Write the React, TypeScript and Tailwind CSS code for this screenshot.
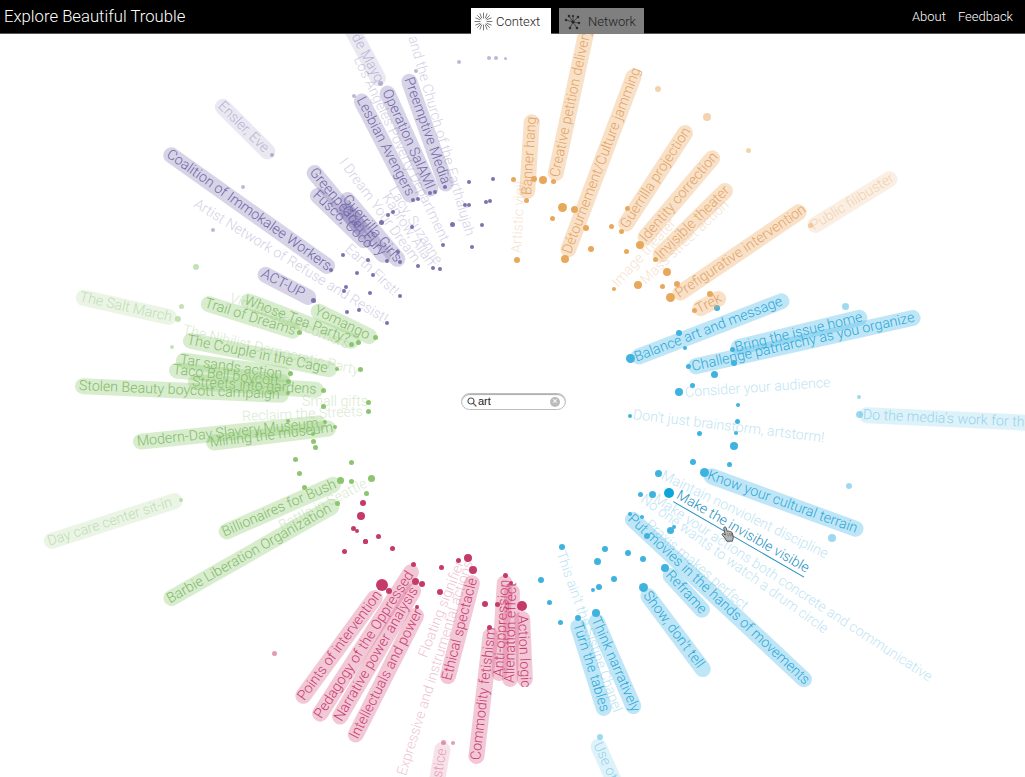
import React from "react";

type Label = [string, number, number, number, number, number?]; // text, x1, y1, x2, y2, level
type Dot = [number, number, number?, number?]; // x, y, size, level

type Group = {
  text: string;
  pill: string;
  dot: string;
  dotSize: number;
  labels: Label[];
  dots: Dot[];
};

const groups: Group[] = [
  {
    text: "text-[#7267a8]",
    pill: "bg-[#7b6fb0]/30",
    dot: "bg-[#7d72ae]",
    dotSize: 4,
    labels: [
      ["Coalition of Immokalee Workers", 168, 153, 330, 268],
      ["Ensler, Eve", 220, 104, 270, 154, 2],
      ["Artist Network of Refuse and Resist!", 195, 203, 383, 318, 3],
      ["ACT-UP", 262, 273, 312, 299],
      ["Greenpeace", 312, 170, 362, 230],
      ["Gran Fury", 344, 208, 386, 258],
      ["Guerrilla Girls", 345, 197, 400, 262],
      ["Fusco, Coco", 315, 193, 367, 243],
      ["Lesbian Avengers", 360, 98, 412, 198],
      ["Operation SalAMI", 386, 90, 432, 192],
      ["Preemptive Media", 408, 78, 447, 187],
      ["Madres de la Plaza de Mayo", 298, -72, 380, 82, 2],
      ["Los Angeles Poverty Department", 357, 57, 443, 237, 3],
      ["Reverend Billy and the Church of the Earthalujah", 387, -50, 472, 243, 3],
      ["I Dream Your Dream", 342, 160, 418, 263, 3],
      ["Lacy, Suzanne", 392, 188, 440, 265, 3],
      ["Kaprow, Allan", 385, 195, 433, 267, 3],
      ["Earth First!", 347, 247, 398, 295, 3],
    ],
    dots: [
      [243, 187, 4, 2], [213, 230, 4, 2], [272, 155, 4, 2], [354, 96, 4, 2], [380, 83, 5, 2], [416, 71, 4, 2],
      [459, 62, 4, 2], [489, 58, 4, 2], [496, 58, 4, 2], [505, 58, 3, 2],
      [469, 182], [493, 179], [465, 205], [469, 205], [486, 202], [490, 201], [452, 224, 5], [482, 225], [472, 247],
      [443, 245], [445, 187], [435, 192], [430, 193], [413, 200], [418, 199], [393, 212], [388, 215], [381, 222, 5],
      [412, 227], [343, 255], [368, 260], [387, 261], [400, 262], [398, 252], [418, 266], [433, 268], [440, 269],
      [331, 270], [357, 273], [373, 275], [346, 287], [344, 291], [370, 293], [400, 296], [313, 300, 5], [347, 312],
      [359, 310], [387, 323],
    ],
  },
  {
    text: "text-[#84b96a]",
    pill: "bg-[#8ecb73]/35",
    dot: "bg-[#8cc46f]",
    dotSize: 5,
    labels: [
      ["The Salt March", 80, 297, 173, 318, 2],
      ["Virtual Streetcorners", 230, 298, 343, 343, 3],
      ["Trail of Dreams", 205, 303, 297, 332],
      ["Whose Tea Party?", 245, 300, 355, 342],
      ["Yomango", 315, 310, 373, 338],
      ["The Nihilist Democratic Party", 183, 330, 355, 370, 3],
      ["The Couple in the Cage", 187, 340, 333, 370],
      ["Tar sands action", 180, 360, 287, 375],
      ["Taco Bell boycott", 173, 370, 285, 382],
      ["Streets into gardens", 192, 382, 320, 390],
      ["Stolen Beauty boycott campaign", 79, 386, 285, 395],
      ["Small gifts", 302, 402, 363, 402, 3],
      ["Reclaim the Streets", 242, 417, 363, 412, 3],
      ["Modern-Day Slavery Museum", 137, 442, 322, 423],
      ["Mining the museum", 210, 443, 332, 428],
      ["Billionaires for Bush", 223, 533, 337, 483],
      ["Battle in Seattle", 280, 527, 368, 482, 3],
      ["Barbie Liberation Organization", 168, 600, 335, 505],
      ["Day care center sit-in", 48, 542, 178, 500, 2],
    ],
    dots: [
      [181, 306, 5, 2], [178, 319, 6, 2], [172, 347, 4, 2], [181, 500, 4, 2], [196, 267, 6, 2],
      [299, 332], [375, 337], [358, 342], [351, 344], [337, 369, 4], [360, 369], [290, 373], [288, 381], [323, 390],
      [288, 393, 4], [323, 406], [368, 402], [368, 411], [288, 421, 4], [325, 422, 4], [335, 427, 4], [313, 434, 4],
      [313, 441], [315, 447], [295, 459], [299, 473], [351, 462], [304, 487], [340, 480, 7], [351, 481], [371, 478, 7],
      [366, 493], [337, 503],
    ],
  },
  {
    text: "text-[#c93a6e]",
    pill: "bg-[#db5f8a]/35",
    dot: "bg-[#c53a69]",
    dotSize: 5,
    labels: [
      ["Points of intervention", 301, 699, 377, 595],
      ["Pedagogy of the Oppressed", 318, 717, 413, 569],
      ["Narrative power analysis", 338, 720, 415, 588],
      ["Intellectuals and power", 354, 738, 418, 612],
      ["Floating signifier", 423, 657, 457, 570, 3],
      ["Expressive and instrumental actions", 402, 775, 467, 568, 3],
      ["Ethical spectacle", 447, 680, 473, 579],
      ["Commodity fetishism", 476, 760, 491, 632],
      ["Anti-oppression", 499, 677, 505, 579],
      ["Alienation effect", 510, 683, 512, 588],
      ["Action logic", 522, 615, 525, 683],
      ["Environmental justice", 420, 880, 443, 746, 2],
    ],
    dots: [
      [344, 551], [365, 541], [392, 548], [382, 585, 12], [389, 591, 6], [413, 564], [415, 581, 7], [422, 584, 6],
      [417, 607, 4], [274, 653, 5, 2], [441, 567], [458, 560], [468, 558, 8], [473, 570, 8], [440, 592, 6], [485, 604, 6],
      [497, 604, 5], [489, 627, 5], [505, 575, 5], [511, 583, 4], [522, 606, 10], [443, 742, 5, 2], [453, 743, 4, 2],
      [363, 503, 6], [361, 516, 8], [353, 528, 5], [357, 531, 4], [378, 536, 5], [365, 541, 5],
    ],
  },
  {
    text: "text-[#2ba6d8]",
    pill: "bg-[#48b8e4]/35",
    dot: "bg-[#3fb3df]",
    dotSize: 5,
    labels: [
      ["Maintain nonviolent discipline", 662, 475, 823, 553, 3],
      ["Make your actions both concrete and communicative", 655, 498, 930, 678, 3],
      ["No one wants to watch a drum circle", 642, 498, 828, 632, 3],
      ["Praxis makes perfect", 647, 523, 743, 605, 3],
      ["Put movies in the hands of movements", 630, 517, 807, 682],
      ["Reframe", 668, 573, 705, 613],
      ["Show, don't tell", 646, 593, 705, 672],
      ["Think narratively", 595, 618, 635, 710],
      ["Turn the tables", 577, 623, 605, 712],
      ["This ain't the Sistine Chapel", 560, 552, 618, 713, 3],
      ["Use others' actions as flyers", 597, 743, 650, 862, 2],
      ["Balance art and message", 635, 358, 785, 300],
      ["Bring the issue home", 735, 348, 863, 317],
      ["Challenge patriarchy as you organize", 692, 367, 917, 317],
      ["Consider your audience", 685, 393, 830, 383, 3],
      ["Don't just brainstorm, artstorm!", 633, 415, 822, 438, 3],
      ["Do the media's work for them", 863, 415, 1053, 424, 2],
      ["Know your cultural terrain", 708, 475, 859, 530],
    ],
    dots: [
      [630, 358, 9], [679, 333, 6], [685, 348, 4], [688, 366, 5], [717, 308, 6], [732, 349, 5], [734, 363, 6], [714, 374, 7],
      [845, 306, 7, 2], [692, 385, 5], [679, 392, 8], [738, 405, 4], [737, 421, 5], [859, 397, 4, 2], [859, 414, 7, 2],
      [630, 416, 4], [699, 433, 5], [736, 433, 4], [734, 446, 8], [693, 462, 6], [729, 464, 5], [704, 472, 9], [849, 486, 6, 2],
      [658, 473, 7], [652, 494, 7], [640, 494, 5], [832, 538, 8, 2], [630, 514, 4], [642, 517, 4], [647, 536, 6], [670, 530, 7],
      [674, 527, 4], [605, 549, 6], [628, 553, 6], [643, 559, 6], [665, 568, 8], [614, 579, 6], [562, 547, 6], [597, 561, 7],
      [599, 587, 6], [593, 590, 4], [643, 587, 9], [541, 580, 6], [549, 602, 5], [560, 622, 5], [578, 618, 6], [596, 613, 8],
      [600, 737, 6, 2],
    ],
  },
  {
    text: "text-[#e2a467]",
    pill: "bg-[#eda860]/35",
    dot: "bg-[#e8a85c]",
    dotSize: 5,
    labels: [
      ["Banner hang", 527, 195, 532, 118],
      ["Creative petition delivery", 555, 177, 590, 15],
      ["Détournement/Culture jamming", 567, 253, 635, 73],
      ["Artistic vigil", 517, 253, 520, 197, 3],
      ["Guerrilla projection", 624, 227, 687, 130],
      ["Identity correction", 643, 240, 715, 155],
      ["Invisible theater", 658, 257, 728, 188],
      ["Image theater", 615, 285, 673, 222, 3],
      ["Mass street action", 643, 282, 727, 203, 3],
      ["Prefigurative intervention", 677, 295, 802, 210],
      ["Public filibuster", 812, 227, 893, 177, 2],
      ["Trek", 697, 310, 722, 297],
    ],
    dots: [
      [513, 179, 5], [534, 179, 6], [543, 180, 8], [553, 181, 5], [526, 200, 5], [562, 207, 9], [574, 209, 7], [552, 218, 5],
      [586, 228, 6], [591, 249, 6], [565, 259, 8], [517, 260, 6], [627, 208, 5], [611, 226, 5], [621, 231, 5], [640, 245, 8],
      [626, 251, 5], [655, 259, 5], [667, 272, 8], [638, 285, 8], [662, 286, 5], [614, 289, 4], [677, 284, 6], [670, 297, 9],
      [710, 294, 6], [694, 310, 5], [658, 89, 6, 2], [707, 117, 8, 2], [748, 150, 5, 2], [810, 225, 5, 2],
    ],
  },
];

const RadialLabel = ({ label, group }: { label: Label; group: Group }) => {
  const [text, x1, y1, x2, y2, level = 1] = label;
  const length = Math.hypot(x2 - x1, y2 - y1);
  const angle = (Math.atan2(y2 - y1, x2 - x1) * 180) / Math.PI;
  return (
    <div
      className={`absolute flex h-[16px] origin-[4px_50%] items-center whitespace-nowrap rounded-full px-1 text-[14.2px] font-light ${
        level === 3 ? "opacity-30" : level === 2 ? "opacity-50" : ""
      } ${level === 3 ? "" : group.pill} ${group.text}`}
      style={{
        left: x1 - 4,
        top: y1 - 8,
        width: length + 8,
        transform: `rotate(${angle}deg)`,
      }}
    >
      {text}
    </div>
  );
};

const SpinnerIcon = () => (
  <svg width="19" height="19" viewBox="0 0 19 19" stroke="#555" strokeWidth="0.8" strokeLinecap="round">
    <path d="M9.500 1v5M9.500 13v5M1 9.500h5M13 9.500h5M3.500 3.500l3.500 3.500M12 12l3.500 3.500M15.500 3.500L12 7M7 12l-3.500 3.500M6 1.700l1.600 4.200M11.400 13l1.600 4.200M13 1.700l-1.600 4.200M7.600 13L6 17.200M1.700 6l4.200 1.600M13 11.400l4.200 1.600M17.200 6L13 7.600M6 11.400L1.700 13" />
  </svg>
);

const NetworkIcon = () => (
  <svg width="18" height="18" viewBox="0 0 18 18" stroke="#222" strokeWidth="0.6" fill="#222">
    <path d="M5 3l4 6 5-5M2 7l7 2 6 1M9 9l-3 6M9 9l4 6M9 9V3" fill="none" />
    <circle cx="5" cy="3" r="1" />
    <circle cx="9" cy="3" r="0.8" />
    <circle cx="14" cy="4" r="1" />
    <circle cx="2" cy="7" r="0.9" />
    <circle cx="9" cy="9" r="1.200" />
    <circle cx="15" cy="10" r="0.9" />
    <circle cx="6" cy="15" r="1" />
    <circle cx="13" cy="15" r="1" />
  </svg>
);

const App = () => {
  return (
    <div className="relative h-[777px] w-[1025px] overflow-hidden bg-white font-['Roboto',sans-serif]">
      {groups.map((group, i) => (
        <React.Fragment key={i}>
          {group.labels.map((label) => (
            <RadialLabel key={label[0]} label={label} group={group} />
          ))}
          {group.dots.map(([x, y, size = group.dotSize, level = 1], j) => (
            <span
              key={j}
              className={`absolute rounded-full ${group.dot} ${level === 2 ? "opacity-50" : ""}`}
              style={{ left: x - size / 2, top: y - size / 2, width: size, height: size }}
            />
          ))}
        </React.Fragment>
      ))}

      {/* hovered label */}
      <div
        className="absolute h-[18px] origin-[0_100%] whitespace-nowrap border-b border-[#1d8fbd] text-[14px] font-light leading-[17px] text-[#1d8fbd]"
        style={{ left: 673, top: 484, width: 151, transform: "rotate(30deg)" }}
      >
        Make the invisible visible
      </div>
      <span className="absolute left-[664px] top-[488px] h-[10px] w-[10px] rounded-full bg-[#0ba5da]" />

      {/* hand cursor */}
      <svg className="absolute left-[721px] top-[526px]" width="14" height="17" viewBox="0 0 14 17">
        <path
          d="M3.200 1.200c.8-.6 1.700-.2 2 .8l1.100 3.400.3-.3c.7-.4 1.300-.2 1.600.4.600-.4 1.300-.2 1.600.5.700-.2 1.300.2 1.500.9l.8 3.200c.3 1.200.2 2.300-.2 3.400l-.6 1.700H5.800L3.800 12 1.500 9.300c-.6-.8-.4-1.500.2-1.800.6-.3 1.200 0 1.800.6l.8 1L2.800 2.700c-.2-.6 0-1.200.4-1.500z"
          fill="#b5b5b5"
          stroke="#3a3a3a"
          strokeWidth="0.8"
        />
        <path d="M6.600 7.500l.8 3M8.600 7l.9 3.400M10.300 7.200l.8 3" fill="none" stroke="#555" strokeWidth="0.6" />
      </svg>

      {/* search box */}
      <div className="absolute left-[461px] top-[393px] flex h-[17px] w-[105px] items-center rounded-full border border-[#bdbdbd] bg-white px-[5px] shadow-[inset_0_1px_1px_#aaa]">
        <svg width="10" height="10" viewBox="0 0 10 10" fill="none" stroke="#555" strokeWidth="1.200" strokeLinecap="round">
          <circle cx="4" cy="4" r="3" />
          <path d="M6.300 6.300L9 9" />
        </svg>
        <span className="ml-px font-['Liberation_Sans',sans-serif] text-[11px] leading-none text-[#222]">art</span>
        <span className="ml-auto flex h-[10px] w-[10px] items-center justify-center rounded-full bg-[#bbb] text-[9px] leading-none text-white">
          ×
        </span>
      </div>

      {/* nav */}
      <header className="absolute inset-x-0 top-0 flex h-[34px] items-stretch border-b border-[#555] bg-black text-white">
        <div className="flex w-[471px] items-center pl-1 pt-px text-[16.7px] font-light">Explore Beautiful Trouble</div>
        <nav className="-mb-px flex items-end gap-2 text-[13px] font-light">
          <div className="flex h-[26px] w-[80px] items-center gap-[3px] bg-white pl-[3px] pt-px text-[#222]">
            <SpinnerIcon />
            Context
          </div>
          <div className="flex h-[26px] w-[85px] items-center gap-[6px] bg-[#7f7f7f] pl-[5px] pt-px text-[#222]">
            <NetworkIcon />
            Network
          </div>
        </nav>
        <div className="ml-auto flex items-center gap-3 pr-3 text-[13px] font-light">
          <span>About</span>
          <span>Feedback</span>
        </div>
      </header>
    </div>
  );
};

export default App;
